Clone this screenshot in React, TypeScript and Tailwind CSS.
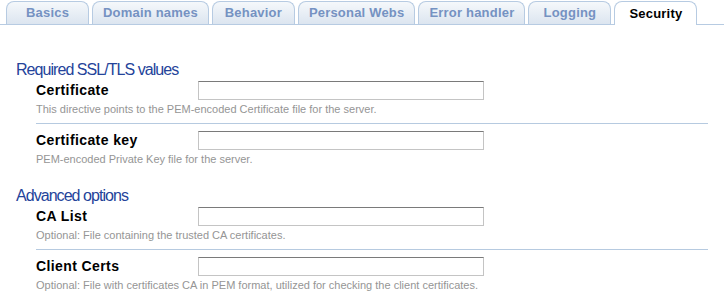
const tabs = ['Basics', 'Domain names', 'Behavior', 'Personal Webs', 'Error handler', 'Logging', 'Security']

const sections = [
  {
    title: 'Required SSL/TLS values',
    fields: [
      { label: 'Certificate', help: 'This directive points to the PEM-encoded Certificate file for the server.' },
      { label: 'Certificate key', help: 'PEM-encoded Private Key file for the server.' },
    ],
  },
  {
    title: 'Advanced options',
    fields: [
      { label: 'CA List', help: 'Optional: File containing the trusted CA certificates.' },
      { label: 'Client Certs', help: 'Optional: File with certificates CA in PEM format, utilized for checking the client certificates.' },
    ],
  },
]

function Tabs() {
  return (
    <div className="flex h-[25px] items-end gap-[3px] border-b border-[#b7cbe2] pl-[6px]">
      {tabs.map((t) => {
        const active = t === 'Security'
        return (
          <div
            key={t}
            className={
              active
                ? 'relative -mb-px flex h-[24px] min-w-[83px] items-center justify-center rounded-t-[8px] border border-b-0 border-[#b7cbe2] bg-white px-[10px] text-[13px] font-bold tracking-[0.2px] text-black'
                : 'flex h-[23px] min-w-[83px] items-center justify-center rounded-t-[8px] border border-b-0 border-[#b7cbe2] bg-gradient-to-b from-[#f5f8fb] to-[#dce5f0] px-[10px] text-[13px] font-bold tracking-[0.2px] text-[#7592c2]'
            }
          >
            {t}
          </div>
        )
      })}
    </div>
  )
}

export default function App() {
  return (
    <div className="h-[294px] w-[724px] overflow-hidden bg-white font-['Liberation_Sans',Arial,sans-serif]">
      <Tabs />
      <div className="pt-[35px]">
        {sections.map((s, si) => (
          <section key={s.title} className={si > 0 ? 'mt-[20px]' : ''}>
            <h2 className="pl-[16px] text-[16px] leading-[20px] tracking-[-0.95px] text-[#24439a]">{s.title}</h2>
            {s.fields.map((f, fi) => (
              <div key={f.label} className="pl-[36px] pr-[16px]">
                {fi > 0 && <div className="my-[7px] h-px bg-[#b6cae0]" />}
                <div className={fi === 0 ? 'mt-[1px] flex items-center' : 'flex items-center'}>
                  <label className="w-[162px] text-[14px] font-bold leading-[19px] tracking-[0.4px] text-black">{f.label}</label>
                  <input
                    type="text"
                    className="h-[19px] w-[286px] border border-[#c4c4c4] border-t-[#7a7a7a] bg-white outline-none"
                  />
                </div>
                <p className="mt-[2px] text-[11px] leading-[14px] text-[#959595]">{f.help}</p>
              </div>
            ))}
          </section>
        ))}
      </div>
    </div>
  )
}
